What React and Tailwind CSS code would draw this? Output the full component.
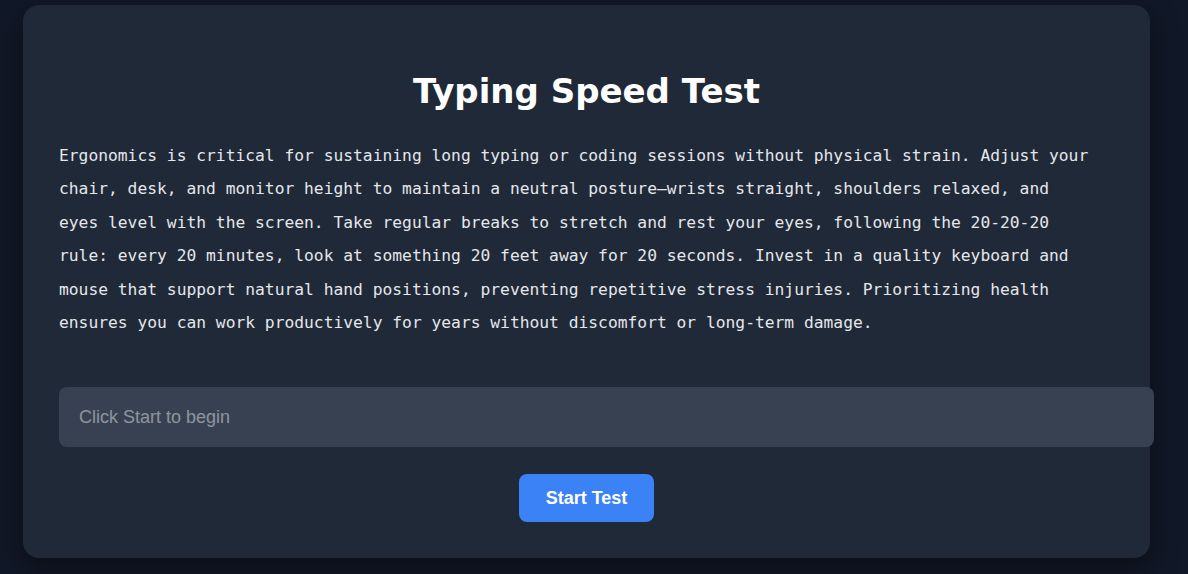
import { useState } from "react";

const PASSAGE =
  "Ergonomics is critical for sustaining long typing or coding sessions without physical strain. Adjust your chair, desk, and monitor height to maintain a neutral posture—wrists straight, shoulders relaxed, and eyes level with the screen. Take regular breaks to stretch and rest your eyes, following the 20-20-20 rule: every 20 minutes, look at something 20 feet away for 20 seconds. Invest in a quality keyboard and mouse that support natural hand positions, preventing repetitive stress injuries. Prioritizing health ensures you can work productively for years without discomfort or long-term damage.";

export default function App() {
  const [started, setStarted] = useState(false);
  const [typed, setTyped] = useState("");

  return (
    <div className="min-h-screen bg-[#111827] pt-[5px] pl-[23px] pb-[17px] font-['Liberation_Sans',Arial,sans-serif]">
      <div className="w-[1127px] rounded-2xl bg-[#1f2937] px-[36px] pt-[36px] pb-[36px] shadow-[0_10px_30px_rgba(0,0,0,0.45)]">
        {/* Title */}
        <h1 className="mt-[30px] text-center text-[34px] leading-[40px] font-bold text-white font-['DejaVu_Sans',sans-serif]">
          Typing Speed Test
        </h1>

        {/* Passage */}
        <p className="mt-[28px] pr-[16px] text-[16.3px] leading-[33.4px] text-[#e5e7eb] font-['DejaVu_Sans_Mono',monospace]">
          {PASSAGE}
        </p>

        {/* Input */}
        <input
          type="text"
          value={typed}
          disabled={!started}
          onChange={(e) => setTyped(e.target.value)}
          placeholder={started ? "Start typing..." : "Click Start to begin"}
          className="mt-[48px] block h-[60px] w-[calc(100%+40px)] rounded-lg bg-[#374151] px-5 text-[18px] leading-[21px] text-[#e5e7eb] outline-none"
        />

        {/* Button */}
        <div className="mt-[27px] flex justify-center">
          <button
            onClick={() => setStarted(true)}
            className="h-[48px] rounded-lg bg-[#3b82f6] px-[27px] text-[18px] leading-[21px] font-bold text-white"
          >
            Start Test
          </button>
        </div>
      </div>
    </div>
  );
}
